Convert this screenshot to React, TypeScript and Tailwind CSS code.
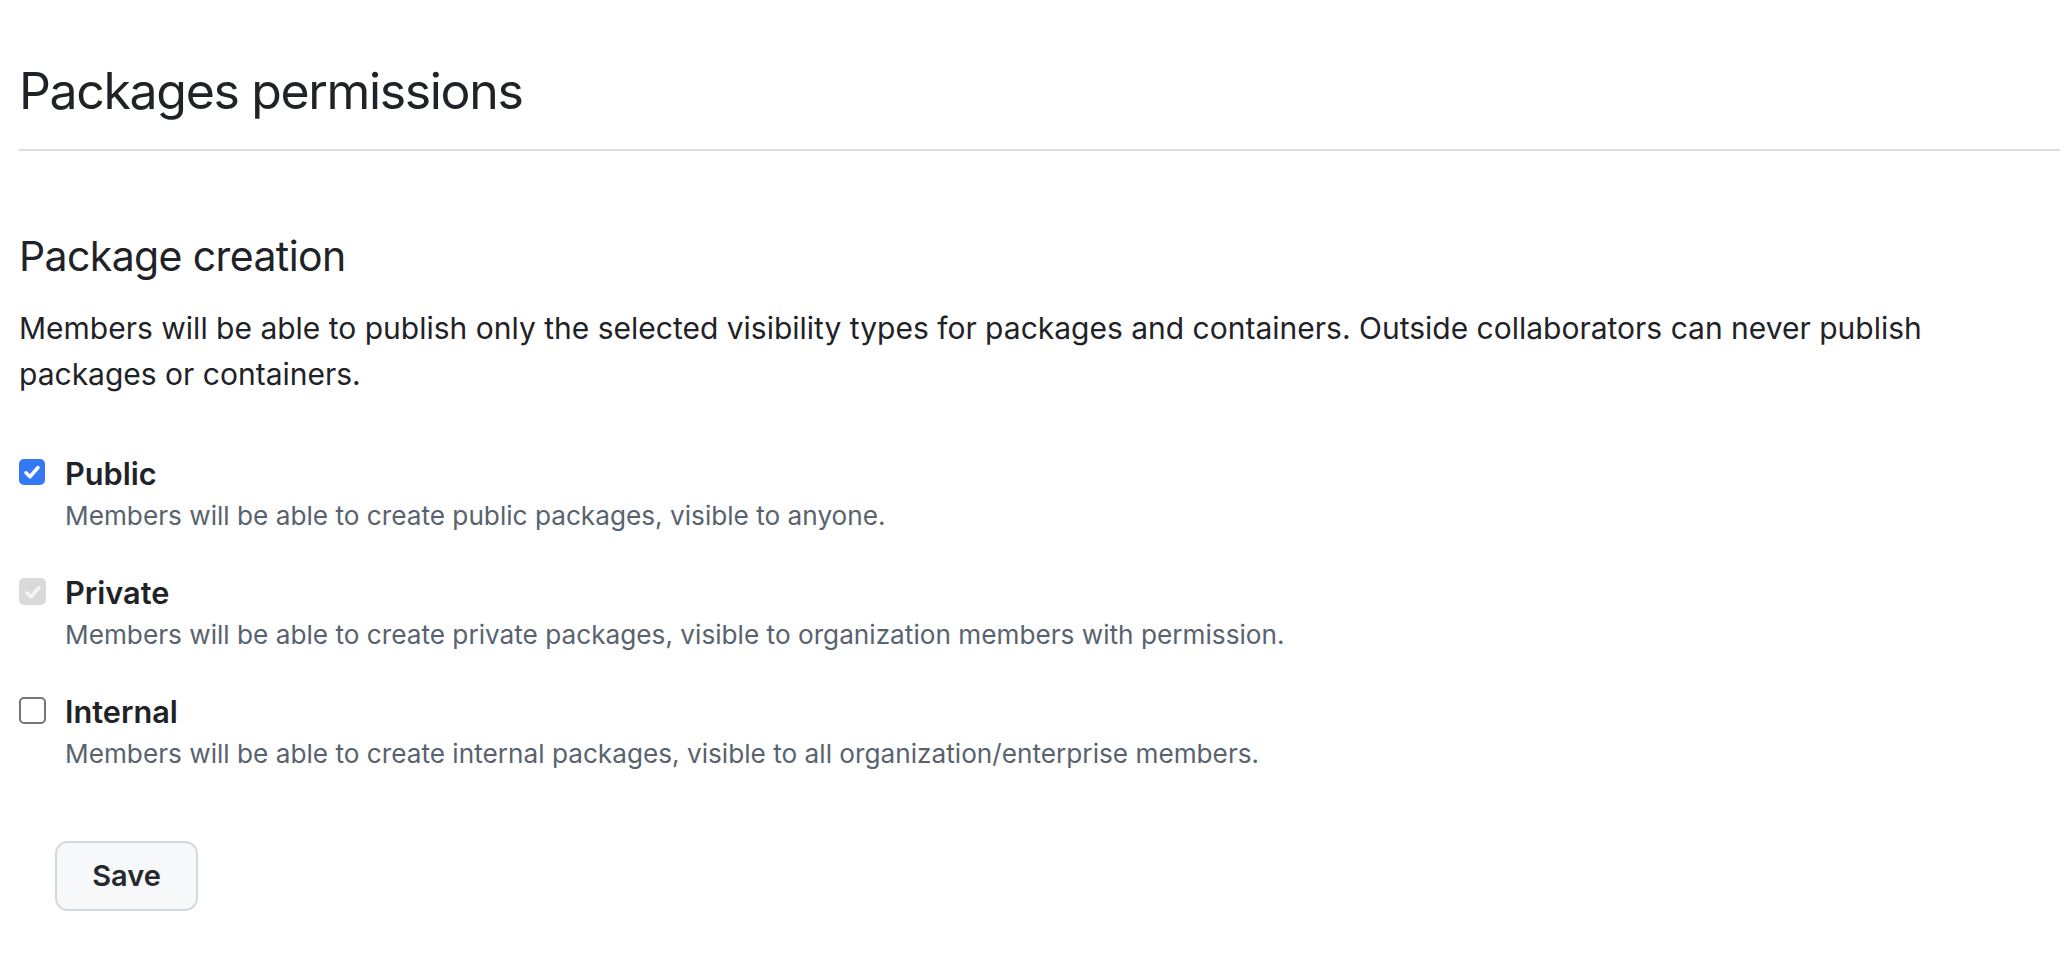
import React from "react";

function CheckIcon({ color }: { color: string }) {
  return (
    <svg width="20" height="20" viewBox="0 0 16 16" fill="none">
      <path d="M3.2 8.6 L6.4 11.8 L12.8 4.4" stroke={color} strokeWidth="2.8" strokeLinecap="round" strokeLinejoin="round" />
    </svg>
  );
}

function Box({ kind }: { kind: "checked" | "disabled" | "empty" }) {
  if (kind === "checked") {
    return (
      <div className="w-[26px] h-[26px] rounded-[5px] bg-[#3478f6] flex items-center justify-center shrink-0">
        <CheckIcon color="#ffffff" />
      </div>
    );
  }
  if (kind === "disabled") {
    return (
      <div className="w-[27px] h-[27px] rounded-[5px] bg-[#d9d9d9] flex items-center justify-center shrink-0">
        <CheckIcon color="#f4f4f4" />
      </div>
    );
  }
  return <div className="w-[27px] h-[27px] rounded-[5px] border-2 border-[#767676] bg-white shrink-0" />;
}

function Option({ kind, label, desc }: { kind: "checked" | "disabled" | "empty"; label: string; desc: string }) {
  return (
    <div className="flex items-start">
      <div className="w-[46px] pt-[5px] shrink-0">
        <Box kind={kind} />
      </div>
      <div className="flex flex-col">
        <div className="text-[30.7px] leading-[40px] font-semibold text-[#1f2328]">{label}</div>
        <div className="mt-[2px] text-[26.2px] leading-[40px] text-[#59636e]">{desc}</div>
      </div>
    </div>
  );
}

export default function App() {
  return (
    <div className="min-h-screen bg-white pl-[19px] pr-[8px]" style={{ fontFamily: "Inter, 'Noto Sans', sans-serif" }}>
      <div className="pt-[60px] pb-[27px] border-b-2 border-[#d8dee4]">
        <h2 className="text-[50px] leading-[62px] font-normal text-[#1f2328] tracking-[-0.027em]">Packages permissions</h2>
      </div>
      <h3 className="mt-[79px] text-[41px] leading-[52px] font-normal text-[#1f2328] tracking-[-0.015em]">Package creation</h3>
      <p className="mt-[23px] text-[30px] leading-[46px] text-[#1f2328] max-w-[1960px]">
        Members will be able to publish only the selected visibility types for packages and containers. Outside collaborators can never publish packages or containers.
      </p>
      <div className="mt-[57px] flex flex-col gap-[37px]">
        <Option kind="checked" label="Public" desc="Members will be able to create public packages, visible to anyone." />
        <Option kind="disabled" label="Private" desc="Members will be able to create private packages, visible to organization members with permission." />
        <Option kind="empty" label="Internal" desc="Members will be able to create internal packages, visible to all organization/enterprise members." />
      </div>
      <div className="mt-[67px] pl-[36px]">
        <button className="w-[143px] h-[70px] rounded-[13px] border-2 border-[#d1d9e0] bg-[#f6f8fa] text-[29px] font-semibold text-[#25292e]">
          Save
        </button>
      </div>
    </div>
  );
}
